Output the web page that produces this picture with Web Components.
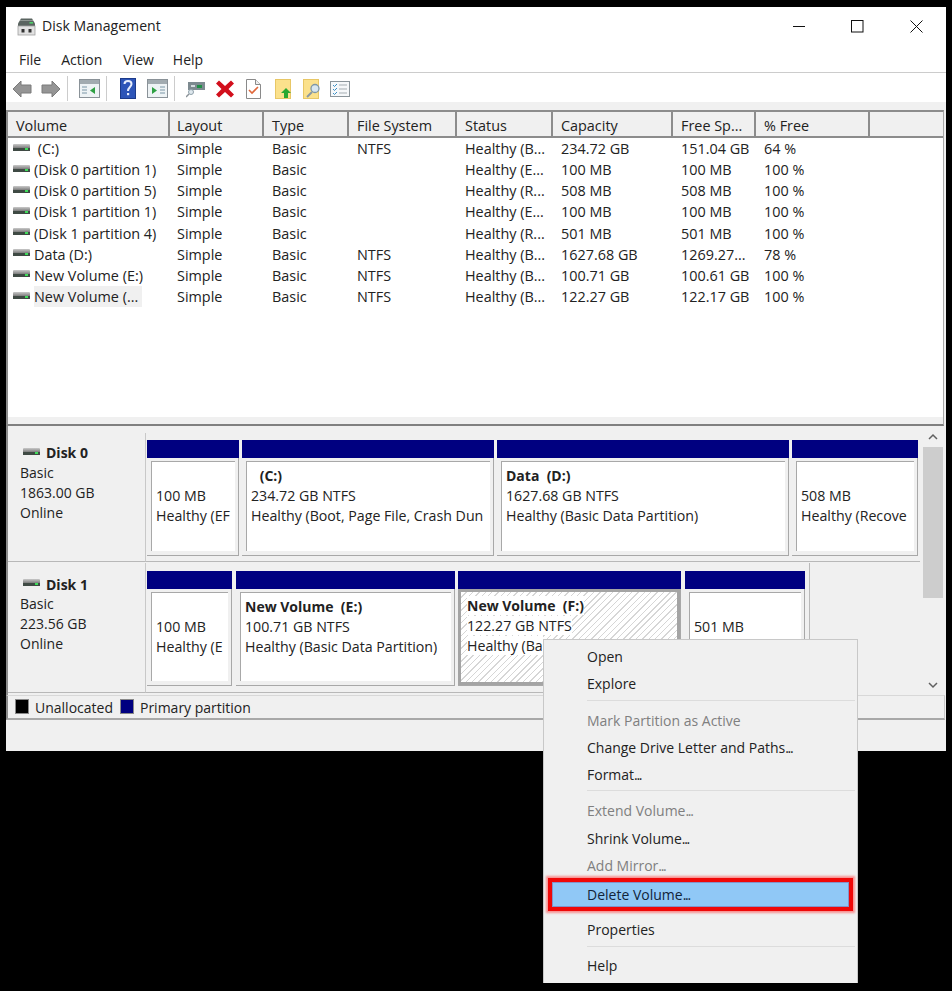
<!DOCTYPE html>
<html><head><meta charset="utf-8">
<style>
html,body{margin:0;padding:0;background:#000;height:991px;overflow:hidden}
body{font:14px/20px "Open Sans","Noto Sans",sans-serif;color:#222;position:relative}
</style></head><body>
<dm-window>
  <dm-titlebar slot="top">Disk Management</dm-titlebar>
  <dm-menubar slot="top"></dm-menubar>
  <dm-toolbar slot="top"></dm-toolbar>
  <dm-table></dm-table>
  <dm-disks>
    <dm-disk name="Disk 0" kind="Basic" size="1863.00 GB" state="Online" class="d0">
      <dm-part w="92" l2="100 MB" l3="Healthy (EF"></dm-part>
      <dm-part w="252" l1="&nbsp;&nbsp;&#8202;(C:)" l2="234.72 GB NTFS" l3="Healthy (Boot, Page File, Crash Dun"></dm-part>
      <dm-part w="292" l1="Data&nbsp;&nbsp;(D:)" l2="1627.68 GB NTFS" l3="Healthy (Basic Data Partition)"></dm-part>
      <dm-part w="126" l2="508 MB" l3="Healthy (Recove"></dm-part>
    </dm-disk>
    <dm-disk name="Disk 1" kind="Basic" size="223.56 GB" state="Online" class="d1">
      <dm-part w="85" l2="100 MB" l3="Healthy (E"></dm-part>
      <dm-part w="219" ml="1" l1="New Volume&nbsp;&nbsp;(E:)" l2="100.71 GB NTFS" l3="Healthy (Basic Data Partition)"></dm-part>
      <dm-part w="223" sel l1="New Volume&nbsp;&nbsp;(F:)" l2="122.27 GB NTFS" l3="Healthy (Ba"></dm-part>
      <dm-part w="120" ml="1" l2="501 MB"></dm-part>
    </dm-disk>
  </dm-disks>
  <dm-legend></dm-legend>
</dm-window>
<dm-context-menu></dm-context-menu>
<script>
function el(name, html){
  customElements.define(name, class extends HTMLElement{
    constructor(){super();this.attachShadow({mode:'open'});}
    connectedCallback(){ this.shadowRoot.innerHTML = html(this); }
  });
}
let gid=0;
const driveIcon = (w=20,h=9)=>{const id='dg'+(++gid);return `<svg width="${w}" height="${h}" viewBox="0 0 20 9"><defs><linearGradient id="${id}" x1="0" y1="0" x2="0" y2="1"><stop offset="0" stop-color="#c9c9c9"/><stop offset=".45" stop-color="#8d8d8d"/><stop offset="1" stop-color="#3c3c3c"/></linearGradient></defs><rect x="1" y="1" width="17" height="7" rx="1" fill="url(#${id})"/><rect x="1" y="5" width="17" height="3" fill="#3f4a44"/><rect x="13" y="5" width="3" height="2" fill="#3fdc5a"/></svg>`;};

el('dm-window', ()=>`<style>
:host{display:flex;flex-direction:column;margin:7px 0 0 6px;width:940px;height:744px;background:#f0f0f0}
</style><slot name="top"></slot><slot></slot>`);

el('dm-titlebar', ()=>`<style>
:host{display:flex;align-items:center;height:38px;background:#fff;padding-left:11px;color:#222;flex:none;font-size:14.1px}
svg.i{margin-right:6px;flex:none}
.t{flex:1}
.c{display:flex;align-items:center;margin-right:23px;gap:46px}
</style>
<svg class="i" width="19" height="19" viewBox="0 0 19 19"><path d="M4 1.500h11l3 5v3H1v-3z" fill="#5a6460"/><path d="M3 3.500h13" stroke="#8f9793"/><rect x="12.500" y="5" width="3.500" height="1.600" fill="#4fd06a"/><rect x="1" y="9" width="17" height="9" fill="#e2e2e2" stroke="#a0a0a0" stroke-width=".8"/><rect x="4.500" y="12" width="3" height="3.500" fill="#333"/><rect x="11.500" y="12" width="3" height="3.500" fill="#333"/></svg>
<span class="t"><slot></slot></span>
<div class="c">
<svg width="13" height="13" viewBox="0 0 13 13"><path d="M1 6.500h12" stroke="#111" fill="none"/></svg>
<svg width="13" height="13" viewBox="0 0 13 13"><rect x=".5" y=".5" width="11.500" height="11.500" stroke="#111" fill="none"/></svg>
<svg width="13" height="13" viewBox="0 0 13 13"><path d="M.5.500l12 12M12.500.500l-12 12" stroke="#111" fill="none"/></svg>
</div>`);

el('dm-menubar', ()=>`<style>
:host{display:flex;align-items:center;height:24px;background:#fff;padding:3px 0 0 13px;border-bottom:1px solid #ccc;flex:none}
span{margin-right:20px}
</style><span>File</span><span style="margin-right:21px">Action</span><span style="margin-right:19px">View</span><span>Help</span>`);

el('dm-toolbar', ()=>{
 const arrow=(d)=>`<svg width="20" height="18" viewBox="0 0 20 18"><path d="${d}" fill="#959595" stroke="#7a7a7a"/></svg>`;
 const win=(a)=>`<svg width="21" height="19" viewBox="0 0 21 19"><rect x=".5" y=".5" width="20" height="18" fill="#eef3f5" stroke="#8a9298"/><rect x="1" y="1" width="19" height="4" fill="#a2abb0"/>${a}</svg>`;
 return `<style>
:host{display:flex;align-items:center;height:29px;box-sizing:border-box;padding:2px 0 0 5px;background:#fff;flex:none}
svg{flex:none;display:block}
i{display:block;width:1px;height:25px;background:#ccc;flex:none}
</style>
<span style="width:1px"></span>${arrow('M1 9l8-8v4h10v8H9v4z')}<span style="width:9px"></span>${arrow('M19 9l-8-8v4H1v8h10v4z')}
<span style="width:6px"></span><i></i><span style="width:11px"></span>
${win('<path d="M3 8h5M3 11h5M3 14h5" stroke="#7b96a6"/><path d="M16 8v7l-5-3.500z" fill="#2ea043"/>')}
<span style="width:6px"></span><i></i><span style="width:13px"></span>
<svg width="16" height="21" viewBox="0 0 16 21"><rect width="16" height="21" fill="#2d55b8"/><rect x=".5" y=".5" width="15" height="20" fill="none" stroke="#1c3a8a"/><path d="M4.500 6c0-4 7-4 7 0 0 3-3.500 3-3.500 7" stroke="#e8eefc" stroke-width="2" fill="none"/><rect x="7" y="15" width="2.200" height="2.200" fill="#e8eefc"/></svg>
<span style="width:11px"></span>
${win('<path d="M5 8v7l5-3.500z" fill="#2ea043"/><path d="M13 8h5M13 11h5M13 14h5" stroke="#7b96a6"/>')}
<span style="width:6px"></span><i></i><span style="width:11px"></span>
<svg width="20" height="19" viewBox="0 0 20 19"><rect x="2" y="3" width="17" height="8" fill="#7d8a90"/><rect x="11" y="6" width="5" height="3" fill="#1f8f45"/><rect x="5" y="6" width="4" height="2" fill="#d5dde0"/><circle cx="5" cy="13" r="2.500" fill="#dfe8ee" stroke="#8fa0aa"/><path d="M3 15l-3 3" stroke="#8a9298" stroke-width="1.500"/></svg>
<span style="width:10px"></span>
<svg width="18" height="18" viewBox="0 0 18 18"><path d="M3 .5l6 5.500L15 .5l3 3-5.500 5.500L18 14.500l-3 3-6-5.500-6 5.500-3-3L5.500 9 0 3.500z" fill="#d20f1c"/></svg>
<span style="width:12px"></span>
<svg width="15" height="20" viewBox="0 0 15 20"><path d="M.5.500h9l5 5v14H.5z" fill="#fff" stroke="#8a8a8a"/><path d="M9.500.500v5h5" fill="#eee" stroke="#8a8a8a"/><path d="M3 11l3 3 6-6" fill="none" stroke="#e0673a" stroke-width="1.600"/></svg>
<span style="width:14px"></span>
<svg width="17" height="20" viewBox="0 0 17 20"><rect x=".5" y=".5" width="15" height="19" fill="#fbe18c" stroke="#e8c766"/><path d="M11 9l5 5h-3v5H9v-5H6z" fill="#2aa830"/></svg>
<span style="width:11px"></span>
<svg width="18" height="20" viewBox="0 0 18 20"><rect x=".5" y=".5" width="15" height="19" fill="#fbe18c" stroke="#e8c766"/><circle cx="12" cy="9.500" r="4" fill="#d8e6ef" stroke="#7f97a6" stroke-width="1.300"/><path d="M9 13l-5 5" stroke="#8a98a2" stroke-width="2"/></svg>
<span style="width:9px"></span>
<svg width="20" height="16" viewBox="0 0 20 16"><rect x=".5" y=".5" width="19" height="15" fill="#f6f8fa" stroke="#8a949a"/><path d="M3 4l1.500 1.500L7 3M3 8l1.500 1.500L7 7M3 12l1.500 1.500L7 11" stroke="#3b8fc4" fill="none"/><path d="M9 4h8M9 8h8M9 12h8" stroke="#a5adb2"/></svg>`;
});

el('dm-table', ()=>{
 const cols=[162,94,85,108,96,120,83,114,74];
 const pads=[8,7,8,8,8,8,8,8,0];
 const heads=['Volume','Layout','Type','File System','Status','Capacity','Free Sp...','% Free',''];
 const rows=[
 ['&nbsp;(C:)','Simple','Basic','NTFS','Healthy (B...','234.72 GB','151.04 GB','64 %'],
 ['(Disk 0 partition 1)','Simple','Basic','','Healthy (E...','100 MB','100 MB','100 %'],
 ['(Disk 0 partition 5)','Simple','Basic','','Healthy (R...','508 MB','508 MB','100 %'],
 ['(Disk 1 partition 1)','Simple','Basic','','Healthy (E...','100 MB','100 MB','100 %'],
 ['(Disk 1 partition 4)','Simple','Basic','','Healthy (R...','501 MB','501 MB','100 %'],
 ['Data (D:)','Simple','Basic','NTFS','Healthy (B...','1627.68 GB','1269.27...','78 %'],
 ['New Volume (E:)','Simple','Basic','NTFS','Healthy (B...','100.71 GB','100.61 GB','100 %'],
 ['New Volume (...','Simple','Basic','NTFS','Healthy (B...','122.27 GB','122.17 GB','100 %']];
 const tpl=cols.map(c=>c+'px').join(' ');
 return `<style>
:host{display:flex;flex-direction:column;margin-top:8px;height:316px;width:938px;box-sizing:border-box;flex:none;background:#fff;border-top:2px solid #8c8c8c;border-bottom:2px solid #808080;border-left:2px solid #8c8c8c;border-right:1px solid #a8a8a8;font-size:14.4px}
.body{flex:1;min-height:0}
.strip{height:7px;background:#f0f0f0;flex:none}
.h,.r{display:grid;grid-template-columns:${tpl};white-space:nowrap}
.h{height:24px;background:#f0f0f0;border-bottom:2px solid #8c8c8c}
.h div{padding-top:4px;border-right:2px solid #8c8c8c;box-sizing:border-box;line-height:20px;height:24px;overflow:hidden}
.h div:last-child{border:0}
.r{height:21.150px;line-height:21px}
.r div{box-sizing:border-box}
.r div:first-child{display:flex;align-items:center}
.r svg{margin-right:2px;flex:none;margin-top:-3px}
.sel{background:#f0f0f0;padding:0 4px 0 0;height:21px}
</style>
<div class="body">
<div class="h">${heads.map((h,j)=>`<div style="padding-left:${pads[j]}px">${h}</div>`).join('')}</div>
${rows.map((r,i)=>`<div class="r">${r.map((c,j)=>`<div style="padding-left:${j==0?4:pads[j]}px">${j==0?driveIcon()+`<span class="${i==7?'sel':''}">${c}</span>`:c}</div>`).join('')}</div>`).join('')}
</div><div class="strip"></div>`;
});

el('dm-disks', ()=>`<style>
:host{display:block;height:269px;flex:none;position:relative;box-sizing:border-box;padding:7px 0 0 0;background:#f0f0f0;border-left:2px solid #8c8c8c}
.sb{position:absolute;right:3px;top:0;bottom:0;width:20px;background:#f0f0f0}
.th{position:absolute;left:0;right:0;top:21px;height:151px;background:#cdcdcd}
svg{position:absolute;left:5px}
</style><slot></slot>
<div class="sb"><svg style="top:7px" width="10" height="8" viewBox="0 0 10 8"><path d="M1 6l4-4 4 4" stroke="#606060" stroke-width="1.500" fill="none"/></svg><div class="th"></div><svg style="bottom:6px" width="10" height="8" viewBox="0 0 10 8"><path d="M1 2l4 4 4-4" stroke="#606060" stroke-width="1.500" fill="none"/></svg></div>`);

el('dm-disk', (t)=>{
 const d1=t.classList.contains('d1');
 return `<style>
:host{display:flex;height:130px;flex:none}
.l{width:137px;flex:none;box-sizing:border-box;padding:${d1?12:10}px 0 0 12px;background:#f0f0f0;border-bottom:1px solid #b8b8b8;line-height:20px;height:${d1?130:129}px}
.n{font-weight:700;display:flex;align-items:center;height:${d1?19:20}px}
.n svg{margin:-4px 4px 0 2px}
.ps{display:flex;gap:3px;box-sizing:border-box;padding:${d1?'8':'7'}px 4px ${d1?'6':'5'}px 1px;border-left:1px solid #c8c8c8;border-bottom:1px solid #b8b8b8;${d1?'width:665px;border-right:1px solid #b8b8b8;':'width:775px;'}height:${d1?130:129}px}
</style>
<div class="l"><div class="n">${driveIcon()}${t.getAttribute('name')}</div><div>${t.getAttribute('kind')}</div><div>${t.getAttribute('size')}</div><div>${t.getAttribute('state')}</div></div>
<div class="ps"><slot></slot></div>`;
});

el('dm-part', (t)=>{
 const sel=t.hasAttribute('sel');
 const g=n=>t.getAttribute(n);
 return `<style>
:host{display:flex;flex-direction:column;width:${g('w')}px;margin-left:${g('ml')||0}px;flex:none;box-sizing:border-box;border-right:1px solid #a8a8a8;border-bottom:1px solid #a8a8a8;font-size:14.2px}
.bar{height:18px;background:#000080;flex:none;margin-right:-1px}
.b{flex:1;margin:3px 3px 4px 4px;background:#fff;border-top:1px solid #a8a8a8;border-left:1px solid #a8a8a8;padding:4px 0 0 4px;white-space:nowrap;overflow:hidden;line-height:20px;box-sizing:border-box}
.b.s{margin:0;border:3px solid #a4a4a4;padding:4px 0 0 6px;background:repeating-linear-gradient(135deg,#fff 0 3.500px,#d6d6d6 3.500px 4.500px)}
.b.s span{background:#fff}
b{font-weight:700;display:block;height:20px;font-size:14px}
</style>
<div class="bar"></div>
<div class="b ${sel?'s':''}">${g('l1')?`<b><span>${g('l1')}</span></b>`:'<b></b>'}<div><span>${g('l2')}</span></div>${g('l3')?`<div><span>${g('l3')}</span></div>`:''}</div>`;
});

el('dm-legend', ()=>`<style>
:host{display:flex;align-items:center;height:25px;border-bottom:2px solid #a8a8a8;border-right:1px solid #c8c8c8;border-left:2px solid #8c8c8c;margin:0 1px 0 0;box-sizing:border-box;padding:1px 0 0 7px;flex:none;border-top:1px solid #d8d8d8}
i{display:block;width:14px;height:15px;margin-right:6px;flex:none;border:1px solid #888;box-sizing:border-box;margin-top:-2px}
span{margin-right:6px}
</style><i style="background:#000"></i><span style="margin-right:7px">Unallocated</span><i style="background:#000080"></i><span>Primary partition</span>`);

el('dm-context-menu', ()=>{
 const dots=t=>t.replace('...','<span class="e">...</span>');
 const it=(t,d)=>`<div class="it ${d?'d':''}">${dots(t)}</div>`;
 return `<style>
:host{position:absolute;left:543px;top:639px;width:315px;height:344px;background:#f0f0f0;border:1px solid #c8c8c8;border-bottom:0;box-sizing:border-box;padding-top:3px;color:#222;font-size:14px}
.it{height:27.300px;line-height:27px;padding-left:43px;white-space:nowrap}
.d{color:#7f7f7f}
.e{letter-spacing:-1.300px}
hr{border:0;height:1px;background:#dcdcdc;margin:2px 2px 6px 43px}
.hl{position:relative;margin:4px 9px 0 9px;height:23px;line-height:23px;padding-left:34px;background:#90c8f6;box-shadow:0 0 0 1px #8592c8,0 0 0 5px #f00808,0 0 2px 7px rgba(255,50,50,.5);color:#12243a}
.gap{height:10px}
.last{margin-bottom:5px}
</style>
${it('Open')}${it('Explore')}<hr>
${it('Mark Partition as Active',1)}${it('Change Drive Letter and Paths...')}${it('Format...')}<hr>
${it('Extend Volume...',1)}${it('Shrink Volume...')}${it('Add Mirror...',1)}
<div class="hl">${dots('Delete Volume...')}</div><div class="gap"></div>
${it('Properties')}<hr class="last">${it('Help')}`;
});
</script>
</body></html>
